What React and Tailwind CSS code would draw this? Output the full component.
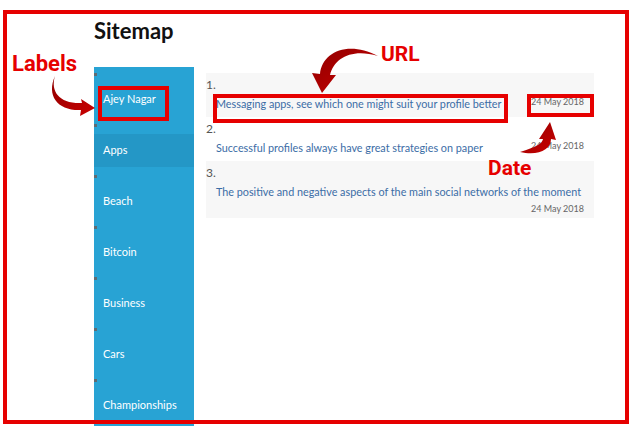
import React from "react";

const labels = ["Ajey Nagar", "Apps", "Beach", "Bitcoin", "Business", "Cars", "Championships"];

const rows = [
  { n: "1.", t: "Messaging apps, see which one might suit your profile better", bg: "bg-[#f7f7f7]" },
  { n: "2.", t: "Successful profiles always have great strategies on paper", bg: "bg-white" },
  { n: "3.", t: "The positive and negative aspects of the main social networks of the moment", bg: "bg-[#f7f7f7]" },
];

export default function App() {
  return (
    <div className="relative w-[639px] h-[426px] overflow-hidden bg-white font-['Lato',sans-serif]">
      <div className="pl-[94px] pt-[16px]">
        <h1 className="h-[51px] text-[22px] leading-[30px] font-bold text-[#111]">Sitemap</h1>
        <div className="flex">
          <aside className="w-[100px] h-[420px] bg-[#28a3d4] pt-[3px]">
            {labels.map((l) => (
              <div key={l} className="mb-[5px]">
                <div className="h-[13px] pt-[3px]">
                  <div className="w-[3px] h-[3px] bg-[#5f6b72]" />
                </div>
                <div
                  className={
                    "h-[33px] flex items-center pl-[9px] text-[11px] text-white " +
                    (l === "Apps" ? "bg-[#2497c6]" : "")
                  }
                >
                  {l}
                </div>
              </div>
            ))}
          </aside>
          <main className="ml-[12px] mt-[6px] w-[388px] self-start">
            {rows.map((r, i) => (
              <div key={r.n} className={r.bg + " pt-[3px] " + (i === 2 ? "pb-[2px]" : "pb-[3px]")}>
                <div className="h-[18px] leading-[18px] text-[12px] text-[#555]">{r.n}</div>
                <div className="flex flex-wrap justify-between pr-[10px]">
                  <a className="pl-[10px] h-[20px] leading-[20px] text-[10.8px] text-[#3b6da6]">{r.t}</a>
                  <span
                    className={
                      "ml-auto text-[9px] text-[#666] " +
                      (i === 2 ? "h-[14px] leading-[14px]" : "h-[20px] leading-[16px]")
                    }
                  >
                    24 May 2018
                  </span>
                </div>
              </div>
            ))}
          </main>
        </div>
      </div>

      {/* annotation overlays */}
      <div className="absolute left-[3px] top-[10px] w-[626px] h-[414px] border-[4px] border-[#e60000] pointer-events-none" />
      <div className="absolute left-[98px] top-[86px] w-[71px] h-[35px] border-[4px] border-[#e60000]" />
      <div className="absolute left-[213px] top-[94px] w-[295px] h-[29px] border-[4px] border-[#e60000]" />
      <div className="absolute left-[527px] top-[94px] w-[67px] h-[23px] border-[4px] border-[#e60000]" />

      <div className="absolute left-[12px] top-[53px] font-['Roboto',sans-serif] font-bold text-[22px] leading-[22px] text-[#e60000]">
        Labels
      </div>
      <div className="absolute left-[381px] top-[44px] font-['Roboto',sans-serif] font-bold text-[21px] leading-[21px] text-[#e60000]">
        URL
      </div>
      <div className="absolute left-[488px] top-[158px] font-['Roboto',sans-serif] font-bold text-[21px] leading-[21px] text-[#e60000]">
        Date
      </div>

      <svg className="absolute left-0 top-0 pointer-events-none" width="639" height="426" viewBox="0 0 639 426">
        <defs>
          <linearGradient id="ar" x1="0" y1="0" x2="1" y2="1">
            <stop offset="0" stopColor="#8f0000" />
            <stop offset="1" stopColor="#cc0000" />
          </linearGradient>
        </defs>
        <path
          d="M55,76 C50,92 60,104 82,103 L81,99 L95,108 L80,116 L81,110 C58,111 46,96 55,76 Z"
          fill="url(#ar)"
        />
        <path
          d="M378,56 C352,48 334,58 330,75 L336,75 L322,93 L312,73 L320,74 C322,52 348,40 378,56 Z"
          fill="url(#ar)"
        />
        <path
          d="M520,152 C536,147 542,144 543,139 L539,139 L550,122 L556,140 L551,139 C551,150 538,156 520,152 Z"
          fill="url(#ar)"
        />
      </svg>
    </div>
  );
}
